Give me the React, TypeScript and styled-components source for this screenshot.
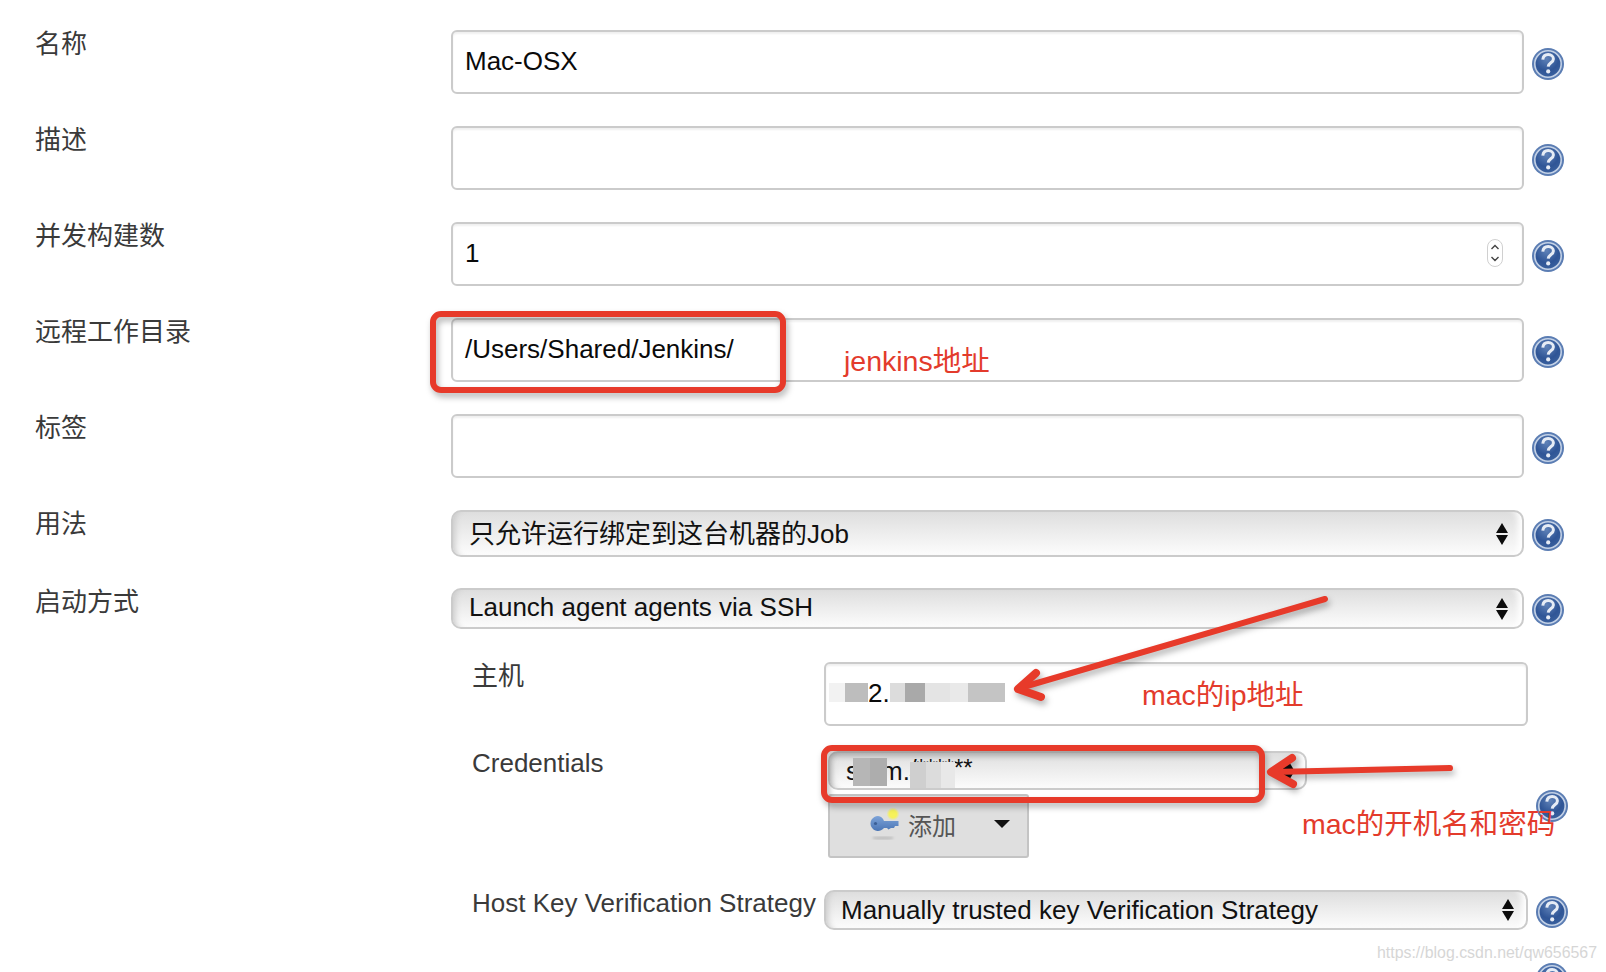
import React from "react";
import styled, { createGlobalStyle } from "styled-components";

const FONT = '"Liberation Sans", "Noto Sans CJK SC", sans-serif';

const Global = createGlobalStyle`
  html, body { margin: 0; padding: 0; background: #fff; }
  body { font-family: ${FONT}; }
`;

const Page = styled.div`
  position: relative;
  width: 1606px;
  height: 972px;
  overflow: hidden;
  background: #fff;
  font-family: ${FONT};
  font-size: 26px;
`;

const Form = styled.div`
  display: flex;
  flex-direction: column;
  padding-top: 28px;
`;

const Row = styled.div<{ $gap?: number }>`
  display: grid;
  grid-template-columns: 451px 1073px auto;
  align-items: start;
  margin-top: ${(p) => p.$gap ?? 0}px;
`;

const SubForm = styled.div`
  display: flex;
  flex-direction: column;
  padding-left: 472px;
`;

const SubRow = styled.div<{ $gap?: number }>`
  display: grid;
  grid-template-columns: 352px 704px auto;
  align-items: start;
  margin-top: ${(p) => p.$gap ?? 0}px;
`;

const Label = styled.div<{ $indent?: boolean; $top?: number }>`
  padding-left: ${(p) => (p.$indent ? 0 : 35)}px;
  margin-top: ${(p) => p.$top ?? 1}px;
  line-height: 30px;
  color: #3a3a3a;
  white-space: nowrap;
`;

const Input = styled.div`
  box-sizing: border-box;
  display: flex;
  align-items: center;
  justify-content: space-between;
  height: 64px;
  margin-top: 2px;
  padding: 0 19px 3px 12px;
  border: 2px solid #cbcbcb;
  border-radius: 6px;
  box-shadow: inset 0 2px 2px #f0f0f0;
  color: #0a0a0a;
  line-height: 30px;
`;

const Select = styled.div<{ $h: number; $pad?: number; $right?: number; $lift?: number; $width?: number }>`
  box-sizing: border-box;
  display: flex;
  align-items: center;
  justify-content: space-between;
  height: ${(p) => p.$h}px;
  width: ${(p) => (p.$width ? `${p.$width}px` : "auto")};
  margin-top: 2px;
  padding: 0 ${(p) => p.$right ?? 14}px 0 ${(p) => p.$pad ?? 16}px;
  border: 2px solid #cbcbcb;
  border-radius: 10px;
  background: linear-gradient(#dedede 0%, #ececec 45%, #fcfcfc 100%);
  box-shadow: inset 8px 0 6px -6px #c9c9c9, inset -10px 0 6px -6px #fff;
  color: #111;
  line-height: 30px;
  white-space: nowrap;

  > span:first-child {
    position: relative;
    top: ${(p) => -(p.$lift ?? 0)}px;
  }
`;

const CredentialStack = styled.div`
  display: flex;
  flex-direction: column;
  align-items: flex-start;
  margin-top: 3px;
  padding-left: 4px;
  gap: 4px;
`;

const CredSelect = styled(Select)`
  margin-top: 0;
`;

const CredValue = styled.span`
  display: inline-flex;
  align-items: center;
`;

const Stars = styled.span`
  position: relative;
  display: inline-block;
  width: 66px;
  height: 30px;
  line-height: 30px;
  font-size: 24px;
  top: -3px;
`;

const Mosaic = styled.span<{ $w: number; $bg: string }>`
  display: inline-block;
  width: ${(p) => p.$w}px;
  height: 19px;
  background: ${(p) => p.$bg};
`;

const StarBlur = styled.span`
  position: absolute;
  left: 0;
  top: 9px;
  width: 45px;
  height: 26px;
  background: linear-gradient(90deg, #cfcfcf 0 35%, #dcdcdc 35% 70%, #e8e8e8 70% 100%);
`;

const CredBlur = styled(Mosaic)`
  position: relative;
  z-index: 1;
  height: 28px;
  margin: 3px -6px 0;
`;

const HostValue = styled.span`
  display: inline-flex;
  align-items: center;
  margin-left: -9px;
`;

const AddButton = styled.div`
  box-sizing: border-box;
  display: flex;
  align-items: center;
  width: 201px;
  height: 64px;
  padding: 0 0 4px 40px;
  border: 2px solid #c4c4c4;
  border-radius: 3px;
  background: #dfdfdf;
  color: #555;
  font-size: 24px;
`;

const AddText = styled.span`
  margin-left: 8px;
`;

const Caret = styled.span`
  width: 0;
  height: 0;
  margin-left: 38px;
  border-left: 8px solid transparent;
  border-right: 8px solid transparent;
  border-top: 8px solid #111;
`;

const HelpSlot = styled.div`
  align-self: center;
  width: 32px;
  height: 32px;
  margin-top: 5px;
  margin-left: 8px;
  line-height: 0;
`;

const LastSpacer = styled.div`
  height: 32px;
`;

const Note = styled.div<{ $x: number; $y: number }>`
  position: absolute;
  left: ${(p) => p.$x}px;
  top: ${(p) => p.$y}px;
  color: #e33b2c;
  font-size: 28.5px;
  line-height: 34px;
  white-space: nowrap;
`;

const Watermark = styled.div`
  position: absolute;
  left: 1377px;
  top: 942px;
  color: #d6d6d6;
  font-size: 15.9px;
  line-height: 22px;
  white-space: nowrap;
`;

const Overlay = styled.svg`
  position: absolute;
  left: 0;
  top: 0;
  width: 1606px;
  height: 972px;
  pointer-events: none;
  filter: drop-shadow(2px 4px 3px rgba(0, 0, 0, 0.3));
`;

const HelpGraphic = styled.svg`
  filter: blur(0.35px);
`;

const HelpIcon = () => (
  <HelpGraphic width="32" height="32" viewBox="0 0 32 32">
    <defs>
      <radialGradient id="helpFill" cx="45%" cy="30%" r="75%">
        <stop offset="0%" stopColor="#5f82b8" />
        <stop offset="60%" stopColor="#2f5596" />
        <stop offset="100%" stopColor="#3b629f" />
      </radialGradient>
    </defs>
    <circle cx="16" cy="16" r="16" fill="#5b7db3" />
    <circle cx="16" cy="16" r="13.2" fill="url(#helpFill)" stroke="#c3d1e6" strokeWidth="1.6" />
    <path
      d="M10.8 11.6c.4-3.2 2.6-5 5.4-5 3 0 5.2 1.8 5.2 4.3 0 3.8-5 3.9-5.2 7.7"
      fill="none"
      stroke="#e6ecf5"
      strokeWidth="3"
    />
    <circle cx="16.2" cy="23.4" r="2.1" fill="#e6ecf5" />
  </HelpGraphic>
);

const SelectArrows = () => (
  <svg width="12" height="24" viewBox="0 0 12 24">
    <path d="M6 1 12 11H0z" fill="#0c0c0c" />
    <path d="M0 13h12L6 23z" fill="#0c0c0c" />
  </svg>
);

const Spinner = () => (
  <svg width="16" height="28" viewBox="0 0 16 28">
    <rect x="0.5" y="0.5" width="15" height="27" rx="7.5" fill="#fff" stroke="#d0d0d0" />
    <path d="M4.5 10 8 6.5l3.5 3.5M4.5 18 8 21.5l3.5-3.5" fill="none" stroke="#444" strokeWidth="1.4" />
  </svg>
);

const KeyIcon = () => (
  <svg width="30" height="34" viewBox="0 0 30 34">
    <defs>
      <radialGradient id="keyGlow">
        <stop offset="0%" stopColor="#f6f25a" />
        <stop offset="55%" stopColor="#f6f25a" />
        <stop offset="100%" stopColor="#f6f25a" stopOpacity="0" />
      </radialGradient>
      <linearGradient id="keyBody" x1="0" y1="0" x2="0" y2="1">
        <stop offset="0%" stopColor="#7da3d8" />
        <stop offset="100%" stopColor="#4a75b5" />
      </linearGradient>
      <filter id="keyShade">
        <feGaussianBlur stdDeviation="1" />
      </filter>
    </defs>
    <ellipse cx="13" cy="31" rx="11" ry="1.6" fill="#bdbdbd" filter="url(#keyShade)" />
    <circle cx="23" cy="7" r="6.5" fill="url(#keyGlow)" />
    <path d="M8 9a7.5 7.5 0 1 0 6 12h3l1.5 1.5L21 21h3l1-2h3.5v-5H14A7.5 7.5 0 0 0 8 9z" fill="url(#keyBody)" />
    <circle cx="5.5" cy="16.5" r="1.6" fill="#3b5f96" />
  </svg>
);

const Annotations = () => (
  <Overlay viewBox="0 0 1606 972">
    <g fill="none" stroke="#e73a2a" strokeLinecap="round" strokeLinejoin="round">
      <rect x="433" y="314" width="350" height="76" rx="8" strokeWidth="6" />
      <rect x="824" y="748" width="438" height="52" rx="8" strokeWidth="6" />
      <path d="M1325 599 1020 688" strokeWidth="6" />
      <path d="M1036 673 1018 689 1041 697" strokeWidth="8" />
      <path d="M1450 768 1273 772" strokeWidth="6" />
      <path d="M1292 758 1271 772 1293 784" strokeWidth="8" />
    </g>
  </Overlay>
);

export default function App() {
  return (
    <Page>
      <Global />
      <Form>
        <Row>
          <Label>名称</Label>
          <Input>Mac-OSX</Input>
          <HelpSlot><HelpIcon /></HelpSlot>
        </Row>
        <Row $gap={30}>
          <Label>描述</Label>
          <Input />
          <HelpSlot><HelpIcon /></HelpSlot>
        </Row>
        <Row $gap={30}>
          <Label>并发构建数</Label>
          <Input>
            1
            <Spinner />
          </Input>
          <HelpSlot><HelpIcon /></HelpSlot>
        </Row>
        <Row $gap={30}>
          <Label>远程工作目录</Label>
          <Input>/Users/Shared/Jenkins/</Input>
          <HelpSlot><HelpIcon /></HelpSlot>
        </Row>
        <Row $gap={30}>
          <Label>标签</Label>
          <Input />
          <HelpSlot><HelpIcon /></HelpSlot>
        </Row>
        <Row $gap={30}>
          <Label>用法</Label>
          <Select $h={47}>
            <span>只允许运行绑定到这台机器的Job</span>
            <SelectArrows />
          </Select>
          <HelpSlot><HelpIcon /></HelpSlot>
        </Row>
        <Row $gap={29}>
          <Label>启动方式</Label>
          <Select $h={41} $lift={2}>
            <span>Launch agent agents via SSH</span>
            <SelectArrows />
          </Select>
          <HelpSlot><HelpIcon /></HelpSlot>
        </Row>
        <SubForm>
          <SubRow $gap={31}>
            <Label $indent>主机</Label>
            <Input>
              <HostValue>
                <Mosaic $w={39} $bg="linear-gradient(90deg, #f2f2f2 0 40%, #bdbdbd 40% 100%)" />
                2.
                <Mosaic $w={115} $bg="linear-gradient(90deg, #dcdcdc 0 13%, #a9a9a9 13% 30%, #e4e4e4 30% 52%, #e9e9e9 52% 68%, #c4c4c4 68% 100%)" />
              </HostValue>
            </Input>
          </SubRow>
          <SubRow $gap={22}>
            <Label $indent $top={0}>Credentials</Label>
            <CredentialStack>
              <CredSelect $h={39} $width={479} $pad={16} $right={11}>
                <CredValue>
                  s
                  <CredBlur $w={34} $bg="linear-gradient(90deg, #b6b6b6 0 50%, #adadad 50% 100%)" />
                  m.
                  <Stars>
                    /******
                    <StarBlur />
                  </Stars>
                </CredValue>
                <SelectArrows />
              </CredSelect>
              <AddButton>
                <KeyIcon />
                <AddText>添加</AddText>
                <Caret />
              </AddButton>
            </CredentialStack>
            <HelpSlot><HelpIcon /></HelpSlot>
          </SubRow>
          <SubRow $gap={30}>
            <Label $indent $top={0}>Host Key Verification Strategy</Label>
            <Select $h={40} $right={12} $pad={15}>
              <span>Manually trusted key Verification Strategy</span>
              <SelectArrows />
            </Select>
            <HelpSlot><HelpIcon /></HelpSlot>
          </SubRow>
          <SubRow $gap={28}>
            <div />
            <LastSpacer />
            <HelpSlot><HelpIcon /></HelpSlot>
          </SubRow>
        </SubForm>
      </Form>
      <Annotations />
      <Note $x={844} $y={344}>jenkins地址</Note>
      <Note $x={1142} $y={678}>mac的ip地址</Note>
      <Note $x={1302} $y={807}>mac的开机名和密码</Note>
      <Watermark>https://blog.csdn.net/qw656567</Watermark>
    </Page>
  );
}
